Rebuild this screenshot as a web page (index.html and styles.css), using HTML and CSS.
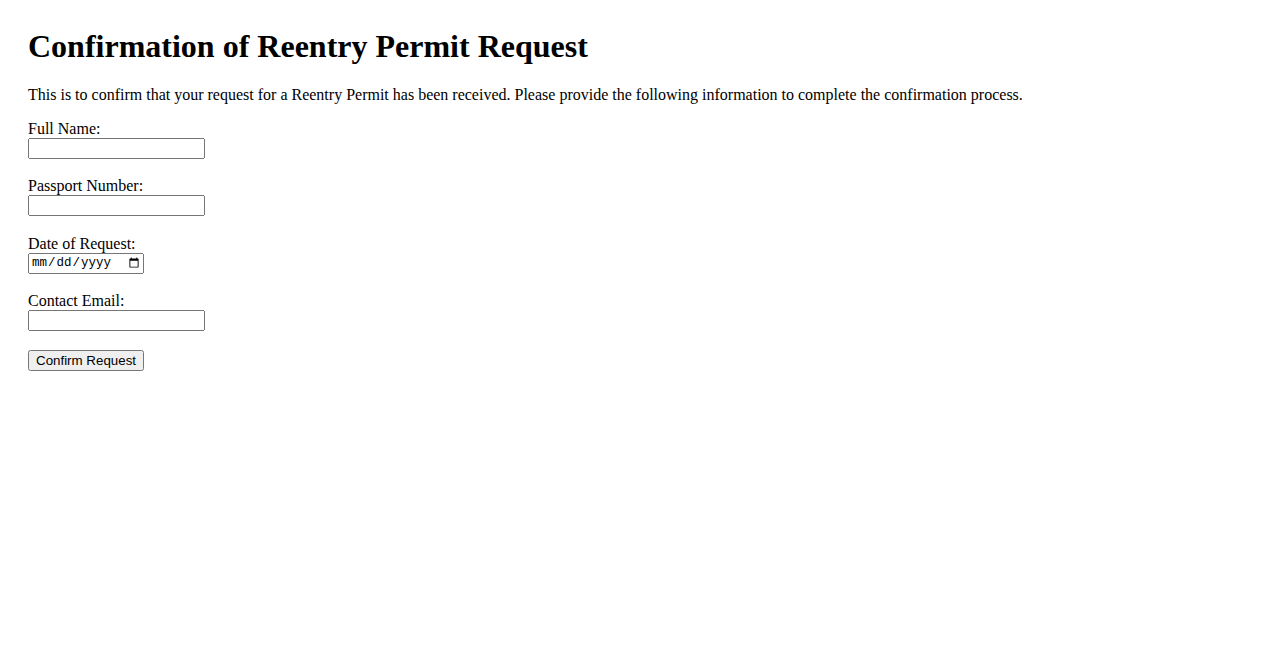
FILE: index.html
```html
<!DOCTYPE html>
<html lang="en">
<head>
  <meta charset="UTF-8">
  <meta name="viewport" content="width=device-width, initial-scale=1.0">
  <title>Reentry Permit Request Confirmation</title>
  <link rel="stylesheet" href="styles.css">
</head>
<body>
  <h1>Confirmation of Reentry Permit Request</h1>
  <p>This is to confirm that your request for a Reentry Permit has been received. Please provide the following information to complete the confirmation process.</p>

  <form class="confirm-form">
    <div class="field">
      <label for="fullName">Full Name:</label>
      <input type="text" id="fullName" name="fullName">
    </div>
    <div class="field">
      <label for="passport">Passport Number:</label>
      <input type="text" id="passport" name="passport">
    </div>
    <div class="field">
      <label for="requestDate">Date of Request:</label>
      <input type="date" id="requestDate" name="requestDate">
    </div>
    <div class="field">
      <label for="email">Contact Email:</label>
      <input type="email" id="email" name="email">
    </div>
    <button type="submit">Confirm Request</button>
  </form>
</body>
</html>
```

FILE: styles.css
```css
body {
  font-family: 'Liberation Serif', 'Times New Roman', serif;
  margin: 0;
  padding: 28px;
  color: #000;
  background: #fff;
}

h1 {
  font-size: 2em;
  margin: 0 0 21px;
}

p {
  margin: 0 0 16px;
}

.field {
  margin-bottom: 18.4px;
}

.field label {
  display: block;
}

.field input {
  display: block;
  box-sizing: border-box;
  width: 177px;
  height: 21px;
  font-family: 'Liberation Sans', Arial, sans-serif;
  font-size: 13.33px;
}

.field input[type=date] {
  width: 116px;
  font-family: 'Liberation Mono', 'Courier New', monospace;
  font-size: 12.5px;
}

button {
  font-family: 'Liberation Sans', Arial, sans-serif;
  font-size: 13.33px;
}
```
